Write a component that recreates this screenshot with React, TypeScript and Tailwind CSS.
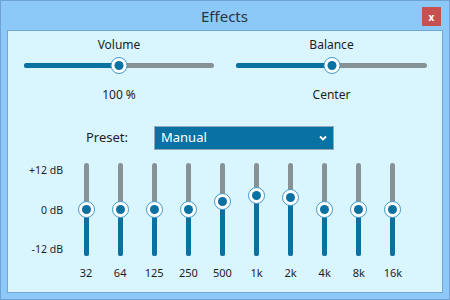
import React from "react";

const BLUE = "bg-[#0a72a3]";

interface Band {
  label: string;
  value: number;
}

const bands: Band[] = [
  { label: "32", value: 0 },
  { label: "64", value: 0 },
  { label: "125", value: 0 },
  { label: "250", value: 0 },
  { label: "500", value: 2.3 },
  { label: "1k", value: 4.1 },
  { label: "2k", value: 3.4 },
  { label: "4k", value: 0 },
  { label: "8k", value: 0 },
  { label: "16k", value: 0 },
];

const Thumb = () => (
  <div className="w-[17px] h-[17px] rounded-full bg-white border border-[#3f97cc] flex items-center justify-center shrink-0">
    <div className={`w-[9px] h-[9px] rounded-full ${BLUE}`} />
  </div>
);

// horizontal slider, percent = position of thumb
const HSlider = ({ percent }: { percent: number }) => (
  <div className="relative h-[17px] flex items-center">
    <div className="w-full h-[5px] rounded-full bg-[#879297] overflow-hidden flex">
      <div className={BLUE} style={{ width: `${percent}%` }} />
    </div>
    <div
      className="absolute top-0 -translate-x-1/2"
      style={{ left: `${percent}%` }}
    >
      <Thumb />
    </div>
  </div>
);

// vertical slider for one EQ band, range -12..+12 dB
const VSlider = ({ value }: { value: number }) => {
  const top = 46.5 - (value / 12) * 42; // thumb centre in px from track top
  return (
    <div className="relative h-[93px] w-[17px] flex justify-center">
      <div className="h-full w-[5px] rounded-full bg-[#879297] overflow-hidden flex flex-col justify-end">
        <div className={BLUE} style={{ height: `${93 - top}px` }} />
      </div>
      <div className="absolute left-0" style={{ top: `${top - 8.5}px` }}>
        <Thumb />
      </div>
    </div>
  );
};

export default function App() {
  return (
    <div
      className="w-[450px] h-[300px] bg-[#8cc8f8] border border-[#6fa3d4] flex flex-col text-[#1e1e1e]"
      style={{ fontFamily: '"Noto Sans", "Open Sans", sans-serif' }}
    >
      {/* Title bar */}
      <div className="h-[29px] flex items-center pl-[7px] pr-[8px]">
        <div className="w-[19px]" />
        <div className="flex-1 text-center text-[15px] text-[#2b3540] leading-none pt-[1px]">
          Effects
        </div>
        <div className="w-[19px] h-[19px] mt-[2px] bg-[#c75050] flex items-center justify-center text-white text-[10px] font-bold leading-none">
          x
        </div>
      </div>

      {/* Content */}
      <div className="ml-[6px] w-[436px] h-[263px] bg-[#d9f5fe] border border-[#74a6d2] text-[12px]">
        {/* Volume / Balance */}
        <div className="flex pl-[16px] pt-[5px] gap-[22px]">
          <div className="w-[190px] flex flex-col items-center">
            <div className="h-[18px] leading-[18px]">Volume</div>
            <div className="w-full mt-[3px]">
              <HSlider percent={50} />
            </div>
            <div className="h-[18px] leading-[18px] mt-[12px]">100 %</div>
          </div>
          <div className="w-[191px] flex flex-col items-center">
            <div className="h-[18px] leading-[18px]">Balance</div>
            <div className="w-full mt-[3px]">
              <HSlider percent={50} />
            </div>
            <div className="h-[18px] leading-[18px] mt-[12px]">Center</div>
          </div>
        </div>

        {/* Preset */}
        <div className="flex items-center mt-[22px] pl-[78px]">
          <div className="w-[68px] text-[13px]">Preset:</div>
          <div className="w-[180px] h-[24px] bg-[#0a72a3] border border-[#8fa9bb] flex items-center justify-between pl-[6px] pr-[6px] text-white text-[13px]">
            <span>Manual</span>
            <svg width="8" height="6" viewBox="0 0 8 6">
              <path d="M1 1.5 L4 4.5 L7 1.5" stroke="white" strokeWidth="1.8" fill="none" />
            </svg>
          </div>
        </div>

        {/* Equalizer */}
        <div className="flex mt-[13px]">
          <div className="w-[55px] h-[93px] flex flex-col justify-between items-end text-[10.5px] pt-[1px] pb-[1px]">
            <span className="leading-[12px]">+12 dB</span>
            <span className="leading-[12px]">0 dB</span>
            <span className="leading-[12px]">-12 dB</span>
          </div>
          <div className="flex ml-[6px]">
            {bands.map((b) => (
              <div key={b.label} className="w-[34.1px] flex flex-col items-center">
                <VSlider value={b.value} />
                <div className="mt-[10px] text-[11px] leading-[14px]">{b.label}</div>
              </div>
            ))}
          </div>
        </div>
      </div>
    </div>
  );
}
